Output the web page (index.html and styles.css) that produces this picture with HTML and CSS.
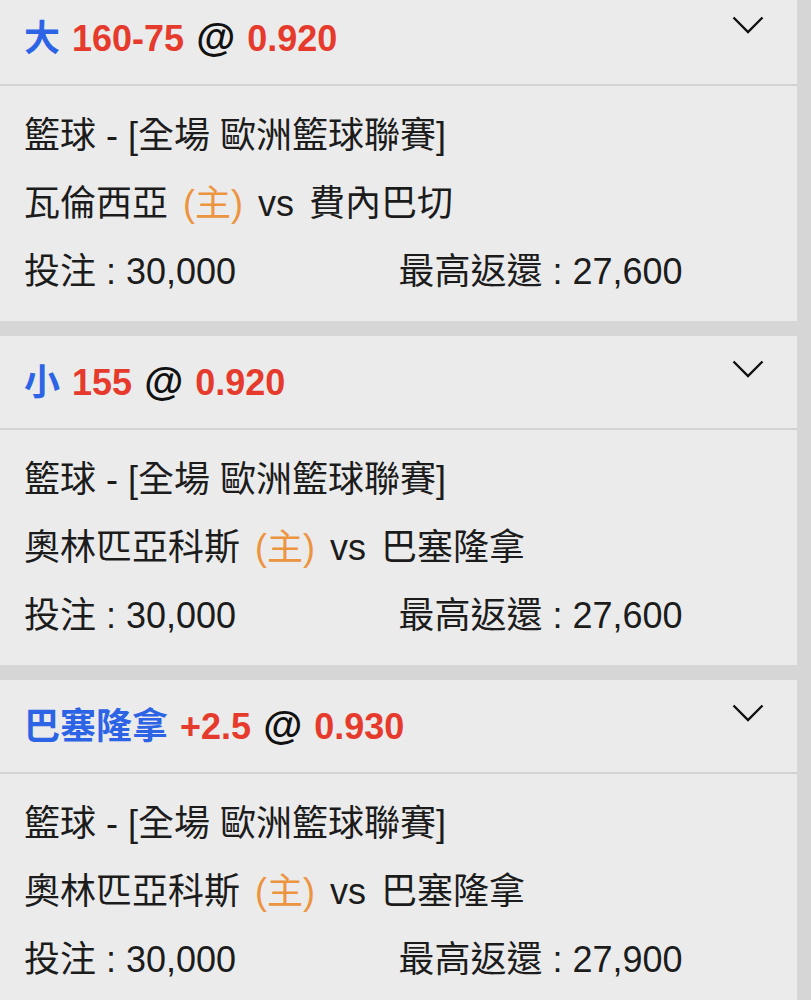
FILE: index.html
```html
<!DOCTYPE html>
<html lang="zh-Hant">
<head>
  <meta charset="UTF-8">
  <meta name="viewport" content="width=device-width, initial-scale=1.0">
  <title>注單</title>
  <link rel="stylesheet" href="styles.css">
</head>
<body>
  <div class="bet-list">
    <div class="bet-card">
      <div class="bet-head">
        <div class="bet-title"><span class="pick">大</span> <span class="odds">160-75</span> <span class="at">@</span> <span class="odds">0.920</span></div>
        <svg class="chevron" width="32" height="18" viewBox="0 0 32 18"><polyline points="1.5,1.5 16,16 30.5,1.5" fill="none" stroke="#111" stroke-width="2.4"/></svg>
      </div>
      <div class="bet-body">
        <div class="line">籃球 - [全場 歐洲籃球聯賽]</div>
        <div class="line teams">瓦倫西亞 <span class="home">(主)</span> vs 費內巴切</div>
        <div class="line amounts"><span>投注 : 30,000</span><span>最高返還 : 27,600</span></div>
      </div>
    </div>

    <div class="bet-card">
      <div class="bet-head">
        <div class="bet-title"><span class="pick">小</span> <span class="odds">155</span> <span class="at">@</span> <span class="odds">0.920</span></div>
        <svg class="chevron" width="32" height="18" viewBox="0 0 32 18"><polyline points="1.5,1.5 16,16 30.5,1.5" fill="none" stroke="#111" stroke-width="2.4"/></svg>
      </div>
      <div class="bet-body">
        <div class="line">籃球 - [全場 歐洲籃球聯賽]</div>
        <div class="line teams">奧林匹亞科斯 <span class="home">(主)</span> vs 巴塞隆拿</div>
        <div class="line amounts"><span>投注 : 30,000</span><span>最高返還 : 27,600</span></div>
      </div>
    </div>

    <div class="bet-card">
      <div class="bet-head">
        <div class="bet-title"><span class="pick">巴塞隆拿</span> <span class="odds">+2.5</span> <span class="at">@</span> <span class="odds">0.930</span></div>
        <svg class="chevron" width="32" height="18" viewBox="0 0 32 18"><polyline points="1.5,1.5 16,16 30.5,1.5" fill="none" stroke="#111" stroke-width="2.4"/></svg>
      </div>
      <div class="bet-body">
        <div class="line">籃球 - [全場 歐洲籃球聯賽]</div>
        <div class="line teams">奧林匹亞科斯 <span class="home">(主)</span> vs 巴塞隆拿</div>
        <div class="line amounts"><span>投注 : 30,000</span><span>最高返還 : 27,900</span></div>
      </div>
    </div>
  </div>
</body>
</html>
```

FILE: styles.css
```css
html,body{
  margin : 0;
  padding : 0;
  background : #d6d6d6;
  font-family : "Liberation Sans", "Noto Sans CJK TC", sans-serif;
  color : #1c1c1c;
}
.bet-list{
  width : 797px;
  margin-top : -8px;
  display : flex;
  flex-direction : column;
  gap : 15px;
}
.bet-card{
  background : #ebebeb;
}
.bet-head{
  height : 92px;
  display : flex;
  justify-content : space-between;
  align-items : flex-start;
  padding : 0 33px 0 24px;
  border-bottom : 2px solid #d3d3d3;
}
.bet-title{
  line-height : 90px;
  font-size : 36px;
  font-weight : bold;
  word-spacing : 2px;
  white-space : nowrap;
}
.pick{
  color : #2d64e6;
}
.odds{
  color : #e53a2c;
}
.at{
  color : #111;
  font-size : 40px;
}
.chevron{
  margin-top : 24px;
}

/* 注單內容 */
.bet-body{
  padding : 16px 24px 15px;
  font-size : 36px;
}
.line{
  line-height : 68px;
  white-space : nowrap;
}
.teams{
  word-spacing : 5px;
}
.home{
  color : #ec9440;
}
.amounts{
  display : grid;
  grid-template-columns : 1fr 1fr;
}
```
